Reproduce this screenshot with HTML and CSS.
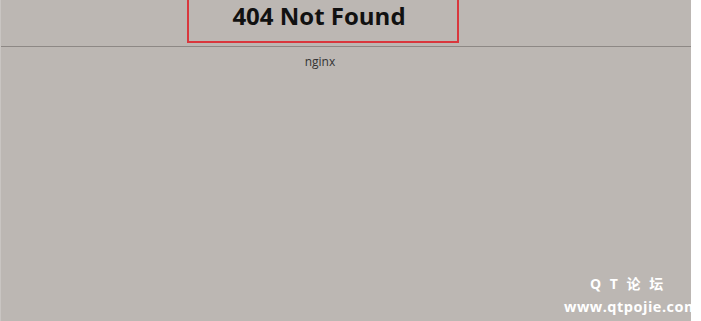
FILE: index.html
```html
<!DOCTYPE html>
<html lang="en">
<head>
    <meta charset="UTF-8">
    <title>404 Not Found</title>
    <link rel="stylesheet" href="styles.css">
</head>
<body>
    <div id="page">
        <div id="head">
            <h1 class="title">404 Not Found</h1>
        </div>
        <hr class="rule">
        <div class="server">nginx</div>
    </div>
    <div id="mark">
        <div class="mark-name">Q T 论 坛</div>
        <div class="mark-url">www.qtpojie.com</div>
    </div>
</body>
</html>
```
FILE: styles.css
```css
body{
    margin: 0;
    background: #ffffff;
    font-family: "Open Sans", "Liberation Sans", sans-serif;
    width: 701px;
    height: 321px;
    overflow: hidden;
    position: relative;
}
#page{
    width: 690px;
    height: 321px;
    background: #bcb7b3;
    border-left: 1px solid #c9c5c2;
}
#head{
    display: flex;
    padding-left: 186px;
}
.title{
    margin: 0;
    margin-top: -10px;
    width: 260px;
    height: 51px;
    padding-right: 8px;
    border: 2px solid #d9373d;
    border-top: none;
    text-align: center;
    font-size: 24px;
    font-weight: 700;
    line-height: 51px;
    color: #111111;
}
.rule{
    margin: 3px 0 0 0;
    border: none;
    height: 1px;
    background: #8d8885;
}
.server{
    width: 638px;
    text-align: center;
    margin-top: 6px;
    font-size: 12px;
    color: #333333;
}
#mark{
    position: absolute;
    left: 564px;
    top: 274px;
    color: #ffffff;
    font-weight: 700;
    font-family: "Open Sans", "Noto Sans CJK SC", sans-serif;
}
.mark-name{
    padding-left: 26px;
    font-size: 14px;
    letter-spacing: 1px;
    word-spacing: 3px;
    line-height: 20px;
}
.mark-url{
    font-size: 14.5px;
    letter-spacing: 0.5px;
    line-height: 20px;
    margin-top: 3px;
}
```
